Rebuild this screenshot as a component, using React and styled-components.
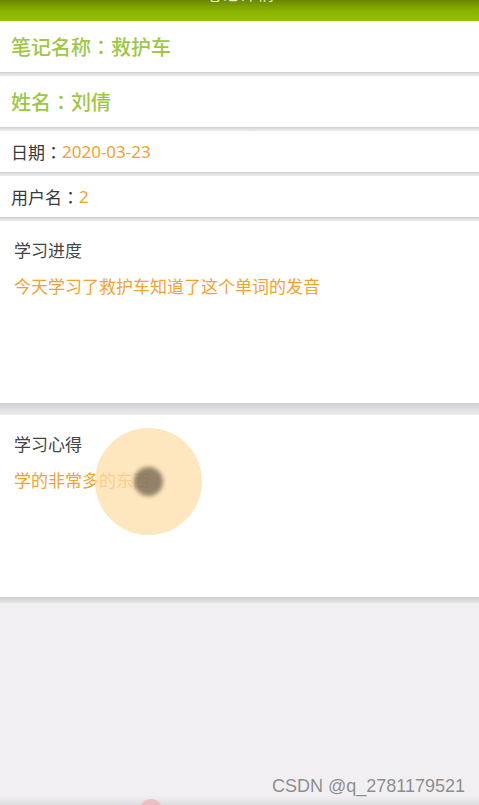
import React from 'react';
import styled, { createGlobalStyle } from 'styled-components';

const GlobalStyle = createGlobalStyle`
  html, body {
    margin: 0;
    padding: 0;
    background: #f1eff2;
  }
  body {
    font-family: 'Noto Sans CJK SC', 'Noto Sans', sans-serif;
  }
`;

const StyledScreen = styled.div`
  position: relative;
  width: 479px;
  height: 805px;
  overflow: hidden;
  background: #f1eff2;
  display: flex;
  flex-direction: column;
`;

const StyledHeader = styled.header`
  height: 21px;
  flex: none;
  overflow: hidden;
  display: flex;
  align-items: flex-end;
  justify-content: center;
  background: linear-gradient(to bottom, #6a8700 0%, #86ad00 45%, #97c302 100%);
`;

const StyledHeaderTitle = styled.span`
  color: #e6efcc;
  font-size: 17px;
  line-height: 17px;
  margin-bottom: 20px;
  letter-spacing: 1px;
`;

const StyledSeparator = styled.div`
  height: ${({ size }) => size}px;
  flex: none;
  background: linear-gradient(to bottom, #cfcfd1 0%, #e4e3e6 60%, #ebeaed 100%);
`;

const StyledRow = styled.div`
  height: ${({ tall }) => (tall ? 51 : 41)}px;
  flex: none;
  display: flex;
  align-items: center;
  padding-left: 11px;
  background: #ffffff;
  font-size: ${({ tall }) => (tall ? 20 : 17)}px;
  font-weight: ${({ tall }) => (tall ? 500 : 400)};
  color: ${({ tall }) => (tall ? '#a0c646' : '#3a3a3a')};
`;

const StyledColon = styled.span`
  font-family: 'Noto Sans CJK TC', 'Noto Sans CJK SC', sans-serif;
`;

const StyledValue = styled.span`
  color: #f0a234;
  font-family: 'Noto Sans', 'Noto Sans CJK SC', sans-serif;
`;

const StyledPanel = styled.section`
  height: 182px;
  flex: none;
  box-sizing: border-box;
  padding: 15px 14px 0;
  background: #ffffff;
  display: flex;
  flex-direction: column;
  gap: 9px;
`;

const StyledPanelTitle = styled.div`
  font-size: 17px;
  line-height: 27px;
  color: #444444;
`;

const StyledPanelText = styled.div`
  font-size: 17px;
  line-height: 27px;
  color: #f0a234;
`;

const StyledBottomShade = styled.div`
  height: 6px;
  flex: none;
  background: linear-gradient(to bottom, #cfcfd1 0%, #e6e5e8 100%);
`;

const StyledFill = styled.div`
  flex: 1;
`;

const StyledNavEdge = styled.div`
  height: 9px;
  flex: none;
  background: linear-gradient(to bottom, #f1eff2 0%, #dedde0 100%);
`;

const StyledTouchRing = styled.div`
  position: absolute;
  left: 95px;
  top: 428px;
  width: 107px;
  height: 107px;
  border-radius: 50%;
  background: rgba(253, 222, 170, 0.75);
  display: flex;
  align-items: center;
  justify-content: center;
`;

const StyledTouchDot = styled.div`
  width: 29px;
  height: 29px;
  border-radius: 50%;
  background: rgba(110, 96, 76, 0.75);
  filter: blur(2px);
`;

const StyledNavDot = styled.div`
  position: absolute;
  left: 140px;
  top: 799px;
  width: 22px;
  height: 22px;
  border-radius: 50%;
  background: rgba(240, 170, 175, 0.6);
`;

const StyledWatermark = styled.div`
  position: absolute;
  right: 14px;
  top: 776px;
  font-family: 'Liberation Sans', Arial, sans-serif;
  font-size: 18px;
  color: #8c8c8c;
  text-shadow: 0 0 1px #ffffff;
`;

const rows = [
  { label: '笔记名称', value: '救护车', tall: true },
  { label: '姓名', value: '刘倩', tall: true },
  { label: '日期', value: '2020-03-23' },
  { label: '用户名', value: '2' },
];

const panels = [
  { title: '学习进度', text: '今天学习了救护车知道了这个单词的发音' },
  { title: '学习心得', text: '学的非常多的东西' },
];

const App = () => (
  <>
    <GlobalStyle />
    <StyledScreen>
      <StyledHeader>
        <StyledHeaderTitle>笔记详情</StyledHeaderTitle>
      </StyledHeader>
      {rows.map((row) => (
        <React.Fragment key={row.label}>
          <StyledRow tall={row.tall}>
            {row.label}
            <StyledColon>：</StyledColon>
            {row.tall ? row.value : <StyledValue>{row.value}</StyledValue>}
          </StyledRow>
          <StyledSeparator size={4} />
        </React.Fragment>
      ))}
      {panels.map((panel, i) => (
        <React.Fragment key={panel.title}>
          <StyledPanel>
            <StyledPanelTitle>{panel.title}</StyledPanelTitle>
            <StyledPanelText>{panel.text}</StyledPanelText>
          </StyledPanel>
          {i === 0 ? <StyledSeparator size={12} /> : <StyledBottomShade />}
        </React.Fragment>
      ))}
      <StyledFill />
      <StyledNavEdge />
      <StyledTouchRing>
        <StyledTouchDot />
      </StyledTouchRing>
      <StyledNavDot />
      <StyledWatermark>CSDN @q_2781179521</StyledWatermark>
    </StyledScreen>
  </>
);

export default App;
